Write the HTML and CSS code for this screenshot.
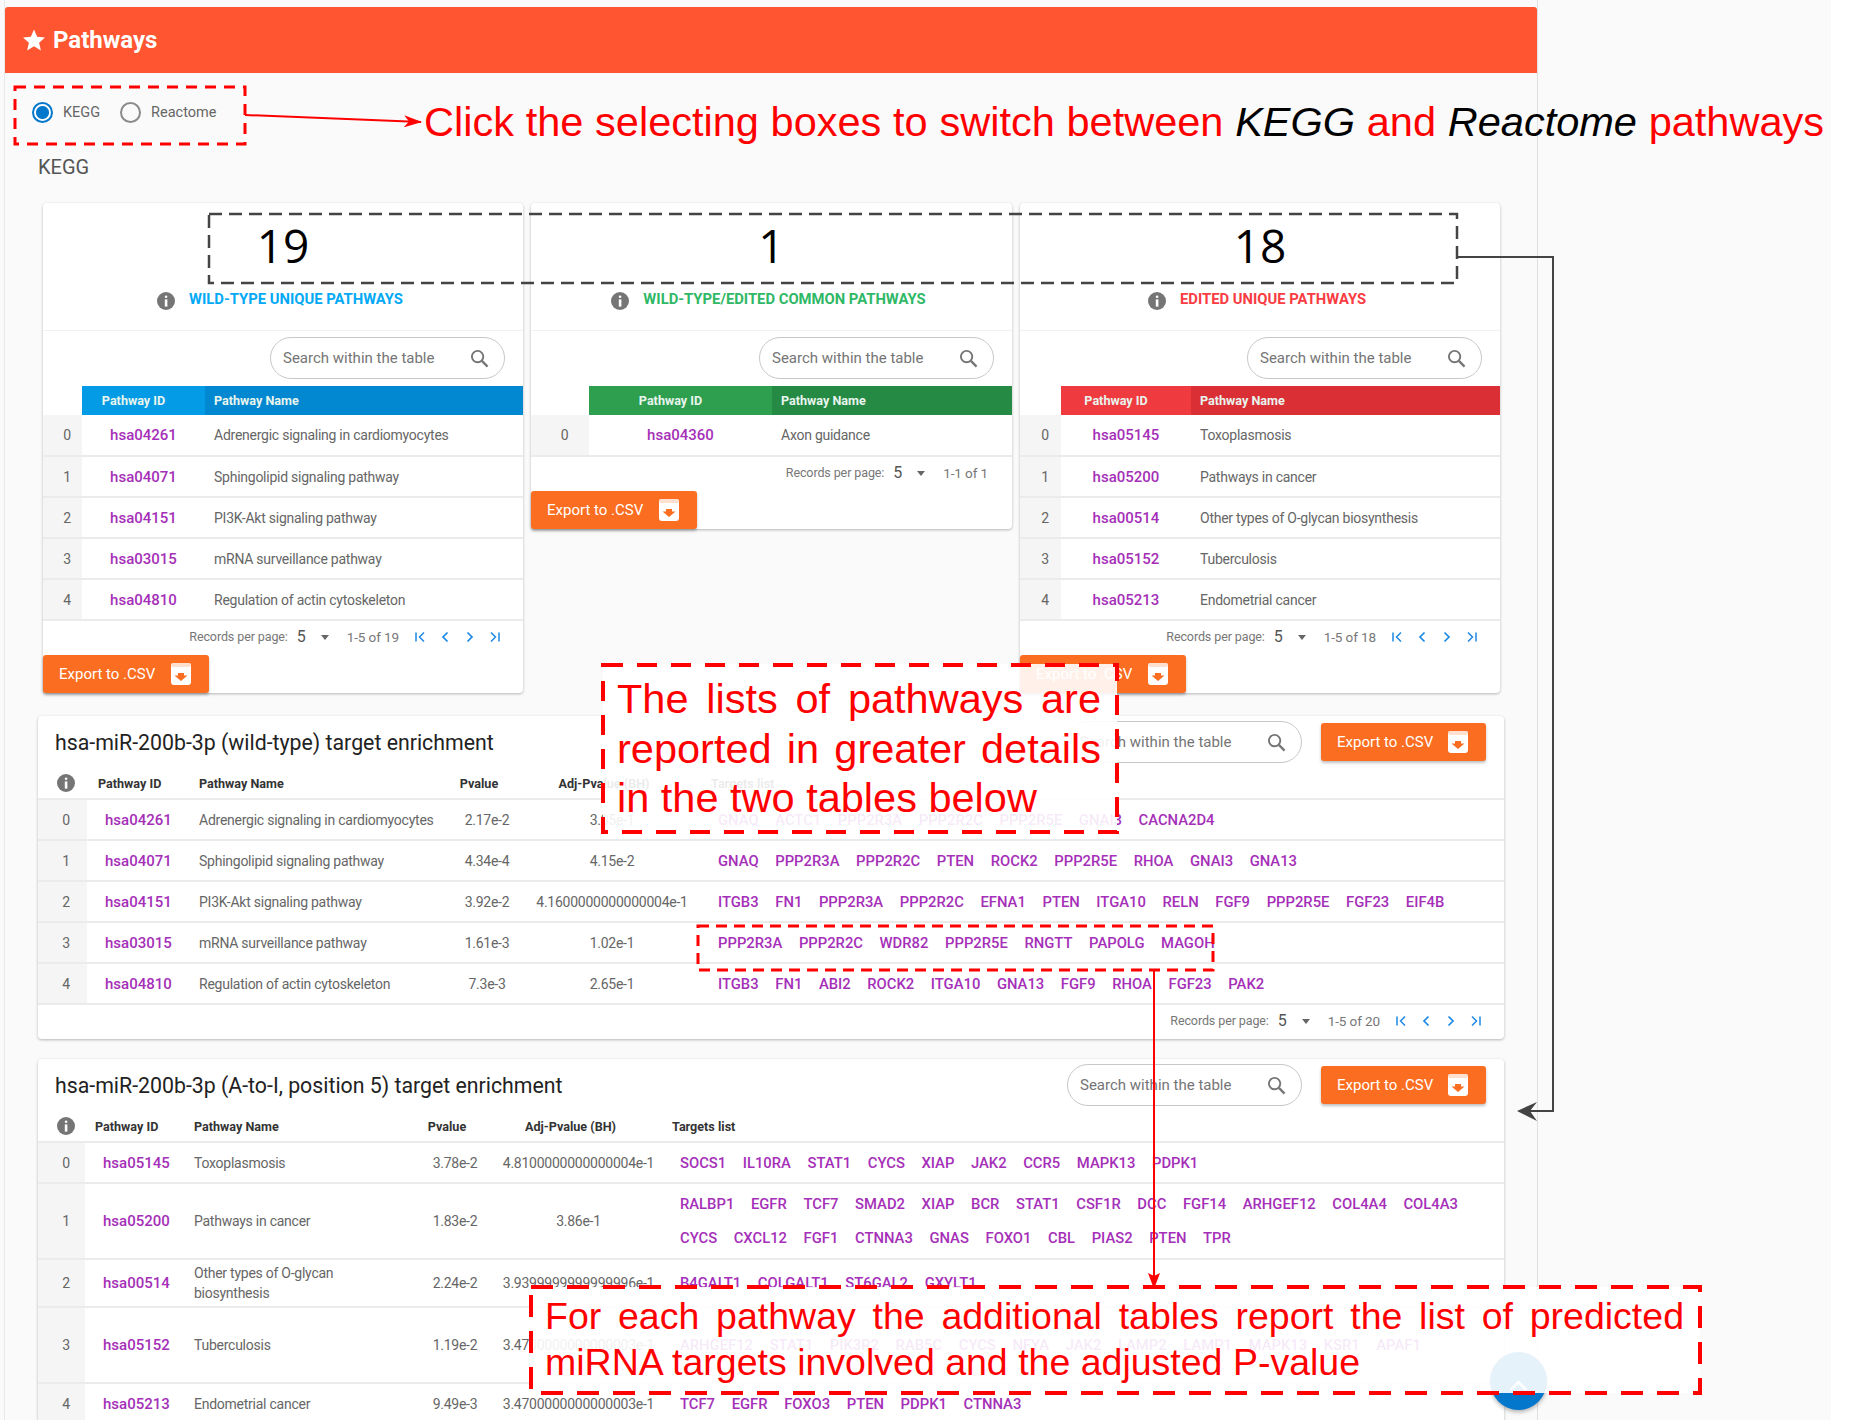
FILE: index.html
```html
<!DOCTYPE html>
<html lang="en">
<head>
    <meta charset="UTF-8">
    <meta name="viewport" content="width=device-width, initial-scale=1.0">
    <title>Pathways</title>
    <link rel="stylesheet" href="styles.css">
</head>
<body>
<svg class="defs" width="0" height="0">
    <symbol id="iconInfo" viewBox="0 0 18 18">
        <circle cx="9" cy="9" r="9" fill="#757575"/>
        <rect x="7.8" y="3.4" width="2.6" height="2.6" rx="1.3" fill="#fff"/>
        <rect x="7.8" y="7.4" width="2.6" height="7.2" fill="#fff"/>
    </symbol>
    <symbol id="iconSearch" viewBox="0 0 20 20">
        <circle cx="8" cy="8" r="6" fill="none" stroke="#757575" stroke-width="2"/>
        <path d="M12.5 12.5L18.5 18.5" stroke="#757575" stroke-width="2.4" fill="none"/>
    </symbol>
    <symbol id="iconExport" viewBox="0 0 20 22">
        <rect x="0" y="0" width="20" height="22" rx="3" fill="#fff"/>
        <rect x="0" y="0" width="20" height="4" rx="2" fill="#fde0cf"/>
        <path d="M7 10h6v2.5h3.5L10 18l-6.5-5.5H7z" fill="#fb6d20"/>
    </symbol>
    <symbol id="iconFirst" viewBox="0 0 12 12">
        <path d="M2 1.5v9M10 1.5L5.5 6l4.500 4.500" fill="none" stroke="#1e88e5" stroke-width="1.5"/>
    </symbol>
    <symbol id="iconPrev" viewBox="0 0 12 12">
        <path d="M8.5 1.5L4 6l4.5 4.5" fill="none" stroke="#1e88e5" stroke-width="1.7"/>
    </symbol>
    <symbol id="iconNext" viewBox="0 0 12 12">
        <path d="M3.5 1.5L8 6l-4.5 4.5" fill="none" stroke="#1e88e5" stroke-width="1.7"/>
    </symbol>
    <symbol id="iconLast" viewBox="0 0 12 12">
        <path d="M10 1.5v9M2 1.5L6.5 6 2 10.5" fill="none" stroke="#1e88e5" stroke-width="1.5"/>
    </symbol>
</svg>

<div class="page">
    <div class="panel">
        <div class="panelHeader">
            <svg class="star" viewBox="0 0 24 24"><path d="M12 1.5l3.2 7.3 7.8.7-5.9 5.2 1.8 7.8L12 18.3l-6.9 4.2 1.8-7.8L1 9.5l7.8-.7z" fill="#fff"/></svg>
            <span>Pathways</span>
        </div>

        <div class="radioRow">
            <span class="radio radioOn"></span><span class="radioLabel">KEGG</span>
            <span class="radio"></span><span class="radioLabel">Reactome</span>
        </div>
        <div class="dbName">KEGG</div>

        <div class="cards">
            <div class="card summary">
                <div class="summaryHead">
                    <div class="count">19</div>
                    <div class="summaryTitle"><svg class="info"><use href="#iconInfo"/></svg><span class="blueText">WILD-TYPE UNIQUE PATHWAYS</span></div>
                </div>
                <div class="searchRow">
                    <div class="search"><span>Search within the table</span><svg><use href="#iconSearch"/></svg></div>
                </div>
                <table class="grid smallGrid">
                    <colgroup><col style="width:39px"><col style="width:123px"><col></colgroup>
                    <thead class="blueHead"><tr><th></th><th class="center">Pathway ID</th><th>Pathway Name</th></tr></thead>
                    <tbody>
                        <tr><td class="idx">0</td><td class="center"><a>hsa04261</a></td><td>Adrenergic signaling in cardiomyocytes</td></tr>
                        <tr><td class="idx">1</td><td class="center"><a>hsa04071</a></td><td>Sphingolipid signaling pathway</td></tr>
                        <tr><td class="idx">2</td><td class="center"><a>hsa04151</a></td><td>PI3K-Akt signaling pathway</td></tr>
                        <tr><td class="idx">3</td><td class="center"><a>hsa03015</a></td><td>mRNA surveillance pathway</td></tr>
                        <tr><td class="idx">4</td><td class="center"><a>hsa04810</a></td><td>Regulation of actin cytoskeleton</td></tr>
                    </tbody>
                </table>
                <div class="pager">
                    <span>Records per page:</span><b>5</b><i class="caret"></i><span class="range">1-5 of 19</span>
                    <svg><use href="#iconFirst"/></svg><svg><use href="#iconPrev"/></svg><svg><use href="#iconNext"/></svg><svg><use href="#iconLast"/></svg>
                </div>
                <div class="exportBtn">Export to .CSV<svg><use href="#iconExport"/></svg></div>
            </div>

            <div class="card summary middle">
                <div class="summaryHead">
                    <div class="count">1</div>
                    <div class="summaryTitle"><svg class="info"><use href="#iconInfo"/></svg><span class="greenText">WILD-TYPE/EDITED COMMON PATHWAYS</span></div>
                </div>
                <div class="searchRow">
                    <div class="search"><span>Search within the table</span><svg><use href="#iconSearch"/></svg></div>
                </div>
                <table class="grid smallGrid">
                    <colgroup><col style="width:58px"><col style="width:183px"><col></colgroup>
                    <thead class="greenHead"><tr><th></th><th class="center">Pathway ID</th><th>Pathway Name</th></tr></thead>
                    <tbody>
                        <tr><td class="idx">0</td><td class="center"><a>hsa04360</a></td><td>Axon guidance</td></tr>
                    </tbody>
                </table>
                <div class="pager">
                    <span>Records per page:</span><b>5</b><i class="caret"></i><span class="range">1-1 of 1</span>
                </div>
                <div class="exportBtn">Export to .CSV<svg><use href="#iconExport"/></svg></div>
            </div>

            <div class="card summary">
                <div class="summaryHead">
                    <div class="count">18</div>
                    <div class="summaryTitle"><svg class="info"><use href="#iconInfo"/></svg><span class="redText">EDITED UNIQUE PATHWAYS</span></div>
                </div>
                <div class="searchRow">
                    <div class="search"><span>Search within the table</span><svg><use href="#iconSearch"/></svg></div>
                </div>
                <table class="grid smallGrid">
                    <colgroup><col style="width:41px"><col style="width:130px"><col></colgroup>
                    <thead class="redHead"><tr><th></th><th class="center">Pathway ID</th><th>Pathway Name</th></tr></thead>
                    <tbody>
                        <tr><td class="idx">0</td><td class="center"><a>hsa05145</a></td><td>Toxoplasmosis</td></tr>
                        <tr><td class="idx">1</td><td class="center"><a>hsa05200</a></td><td>Pathways in cancer</td></tr>
                        <tr><td class="idx">2</td><td class="center"><a>hsa00514</a></td><td>Other types of O-glycan biosynthesis</td></tr>
                        <tr><td class="idx">3</td><td class="center"><a>hsa05152</a></td><td>Tuberculosis</td></tr>
                        <tr><td class="idx">4</td><td class="center"><a>hsa05213</a></td><td>Endometrial cancer</td></tr>
                    </tbody>
                </table>
                <div class="pager">
                    <span>Records per page:</span><b>5</b><i class="caret"></i><span class="range">1-5 of 18</span>
                    <svg><use href="#iconFirst"/></svg><svg><use href="#iconPrev"/></svg><svg><use href="#iconNext"/></svg><svg><use href="#iconLast"/></svg>
                </div>
                <div class="exportBtn">Export to .CSV<svg><use href="#iconExport"/></svg></div>
            </div>
        </div>

        <div class="card wide">
            <div class="wideHead">
                <h2>hsa-miR-200b-3p (wild-type) target enrichment</h2>
                <div class="search"><span>Search within the table</span><svg><use href="#iconSearch"/></svg></div>
                <div class="exportBtn">Export to .CSV<svg><use href="#iconExport"/></svg></div>
            </div>
            <table class="grid bigGrid tableWt">
                <colgroup><col style="width:49px"><col style="width:103px"><col style="width:260px"><col style="width:74px"><col style="width:176px"><col></colgroup>
                <thead><tr><th class="center"><svg class="info"><use href="#iconInfo"/></svg></th><th>Pathway ID</th><th>Pathway Name</th><th class="center pHead">Pvalue</th><th class="center pHead">Adj-Pvalue (BH)</th><th>Targets list</th></tr></thead>
                <tbody>
                    <tr><td class="idx">0</td><td class="idCell"><a>hsa04261</a></td><td>Adrenergic signaling in cardiomyocytes</td><td class="center">2.17e-2</td><td class="center">3.05e-1</td><td class="targets"><a>GNAQ</a><a>ACTC1</a><a>PPP2R3A</a><a>PPP2R2C</a><a>PPP2R5E</a><a>GNAI3</a><a>CACNA2D4</a></td></tr>
                    <tr><td class="idx">1</td><td class="idCell"><a>hsa04071</a></td><td>Sphingolipid signaling pathway</td><td class="center">4.34e-4</td><td class="center">4.15e-2</td><td class="targets"><a>GNAQ</a><a>PPP2R3A</a><a>PPP2R2C</a><a>PTEN</a><a>ROCK2</a><a>PPP2R5E</a><a>RHOA</a><a>GNAI3</a><a>GNA13</a></td></tr>
                    <tr><td class="idx">2</td><td class="idCell"><a>hsa04151</a></td><td>PI3K-Akt signaling pathway</td><td class="center">3.92e-2</td><td class="center">4.1600000000000004e-1</td><td class="targets"><a>ITGB3</a><a>FN1</a><a>PPP2R3A</a><a>PPP2R2C</a><a>EFNA1</a><a>PTEN</a><a>ITGA10</a><a>RELN</a><a>FGF9</a><a>PPP2R5E</a><a>FGF23</a><a>EIF4B</a></td></tr>
                    <tr><td class="idx">3</td><td class="idCell"><a>hsa03015</a></td><td>mRNA surveillance pathway</td><td class="center">1.61e-3</td><td class="center">1.02e-1</td><td class="targets"><a>PPP2R3A</a><a>PPP2R2C</a><a>WDR82</a><a>PPP2R5E</a><a>RNGTT</a><a>PAPOLG</a><a>MAGOH</a></td></tr>
                    <tr><td class="idx">4</td><td class="idCell"><a>hsa04810</a></td><td>Regulation of actin cytoskeleton</td><td class="center">7.3e-3</td><td class="center">2.65e-1</td><td class="targets"><a>ITGB3</a><a>FN1</a><a>ABI2</a><a>ROCK2</a><a>ITGA10</a><a>GNA13</a><a>FGF9</a><a>RHOA</a><a>FGF23</a><a>PAK2</a></td></tr>
                </tbody>
            </table>
            <div class="pager">
                <span>Records per page:</span><b>5</b><i class="caret"></i><span class="range">1-5 of 20</span>
                <svg><use href="#iconFirst"/></svg><svg><use href="#iconPrev"/></svg><svg><use href="#iconNext"/></svg><svg><use href="#iconLast"/></svg>
            </div>
        </div>

        <div class="card wide">
            <div class="wideHead">
                <h2>hsa-miR-200b-3p (A-to-I, position 5) target enrichment</h2>
                <div class="search"><span>Search within the table</span><svg><use href="#iconSearch"/></svg></div>
                <div class="exportBtn">Export to .CSV<svg><use href="#iconExport"/></svg></div>
            </div>
            <table class="grid bigGrid tableEdited">
                <colgroup><col style="width:47px"><col style="width:100px"><col style="width:240px"><col style="width:60px"><col style="width:180px"><col></colgroup>
                <thead><tr><th class="center"><svg class="info"><use href="#iconInfo"/></svg></th><th>Pathway ID</th><th>Pathway Name</th><th class="center pHead">Pvalue</th><th class="center pHead">Adj-Pvalue (BH)</th><th>Targets list</th></tr></thead>
                <tbody>
                    <tr><td class="idx">0</td><td class="idCell"><a>hsa05145</a></td><td>Toxoplasmosis</td><td class="center">3.78e-2</td><td class="center">4.8100000000000004e-1</td><td class="targets"><a>SOCS1</a><a>IL10RA</a><a>STAT1</a><a>CYCS</a><a>XIAP</a><a>JAK2</a><a>CCR5</a><a>MAPK13</a><a>PDPK1</a></td></tr>
                    <tr class="tallRow"><td class="idx">1</td><td class="idCell"><a>hsa05200</a></td><td>Pathways in cancer</td><td class="center">1.83e-2</td><td class="center">3.86e-1</td><td class="targets"><a>RALBP1</a><a>EGFR</a><a>TCF7</a><a>SMAD2</a><a>XIAP</a><a>BCR</a><a>STAT1</a><a>CSF1R</a><a>DCC</a><a>FGF14</a><a>ARHGEF12</a><a>COL4A4</a><a>COL4A3</a><a>CYCS</a><a>CXCL12</a><a>FGF1</a><a>CTNNA3</a><a>GNAS</a><a>FOXO1</a><a>CBL</a><a>PIAS2</a><a>PTEN</a><a>TPR</a></td></tr>
                    <tr class="midRow"><td class="idx">2</td><td class="idCell"><a>hsa00514</a></td><td class="wrapName">Other types of O-glycan biosynthesis</td><td class="center">2.24e-2</td><td class="center">3.9399999999999996e-1</td><td class="targets"><a>B4GALT1</a><a>COLGALT1</a><a>ST6GAL2</a><a>GXYLT1</a></td></tr>
                    <tr class="tallRow"><td class="idx">3</td><td class="idCell"><a>hsa05152</a></td><td>Tuberculosis</td><td class="center">1.19e-2</td><td class="center">3.4700000000000003e-1</td><td class="targets"><a>ARHGEF12</a><a>STAT1</a><a>PIK3R2</a><a>RAB5C</a><a>CYCS</a><a>NFYA</a><a>JAK2</a><a>LAMP2</a><a>LAMP1</a><a>MAPK13</a><a>KSR1</a><a>APAF1</a></td></tr>
                    <tr><td class="idx">4</td><td class="idCell"><a>hsa05213</a></td><td>Endometrial cancer</td><td class="center">9.49e-3</td><td class="center">3.4700000000000003e-1</td><td class="targets"><a>TCF7</a><a>EGFR</a><a>FOXO3</a><a>PTEN</a><a>PDPK1</a><a>CTNNA3</a></td></tr>
                </tbody>
            </table>
        </div>
    </div>

    <!-- scroll to top, sits under the note box -->
    <div class="scrollTop"><svg viewBox="0 0 16 16"><path d="M3.5 10L8 5.5l4.5 4.5" fill="none" stroke="#fff" stroke-width="1.6"/></svg></div>

    <!-- annotations drawn on top of the screenshot -->
    <div class="topNote">Click the selecting boxes to switch between <em>KEGG</em> and <em>Reactome</em> pathways</div>
    <div class="note noteLists">
        <div class="fill">The lists of pathways are</div>
        <div class="fill">reported in greater details</div>
        <div>in the two tables below</div>
    </div>
    <div class="note noteTargets">
        <div class="fill">For each pathway the additional tables report the list of predicted</div>
        <div>miRNA targets involved and the adjusted P-value</div>
    </div>
    <svg class="marks" viewBox="0 0 1854 1425">
        <defs>
            <marker id="redHead" markerWidth="18" markerHeight="12" refX="17" refY="6" orient="auto" markerUnits="userSpaceOnUse"><path d="M0 0L18 6L0 12L5 6z" fill="#f00"/></marker>
            <marker id="redDown" markerWidth="12" markerHeight="16" refX="6" refY="15" orient="0" markerUnits="userSpaceOnUse"><path d="M0 0L6 3L12 0L6 16z" fill="#f00"/></marker>
        </defs>
        <rect x="15" y="87" width="230" height="57" fill="none" stroke="#f00" stroke-width="3" stroke-dasharray="11 8"/>
        <path d="M245 115L421 122" stroke="#f00" stroke-width="2" fill="none" marker-end="url(#redHead)"/>
        <rect x="209" y="214" width="1248" height="69" fill="none" stroke="#444" stroke-width="2.5" stroke-dasharray="13 7"/>
        <path d="M1457 257H1553V1111H1520" stroke="#444" stroke-width="2" fill="none"/>
        <path d="M1517 1111L1537 1102L1530 1111L1537 1121z" fill="#444"/>
        <rect x="603" y="665" width="514" height="167" fill="none" stroke="#f00" stroke-width="4" stroke-dasharray="20 14"/>
        <rect x="698" y="926" width="515" height="44" fill="none" stroke="#f00" stroke-width="3" stroke-dasharray="11 7"/>
        <path d="M1154 970V1288" stroke="#f00" stroke-width="2" fill="none" marker-end="url(#redDown)"/>
        <rect x="531" y="1287" width="1169" height="106" fill="none" stroke="#f00" stroke-width="4" stroke-dasharray="22 14"/>
    </svg>
</div>
</body>
</html>
```

FILE: styles.css
```css
* {
    box-sizing: border-box;
}
body {
    margin: 0;
    padding: 0;
    background-color: #fff;
    font-family: Roboto, "Liberation Sans", sans-serif;
    color: #666;
}
.defs {
    position: absolute;
}
.page {
    position: relative;
    width: 1831px;
    height: 1420px;
    background-color: #fafafa;
    overflow: hidden;
}
.panel {
    width: 1534px;
    height: 1420px;
    margin-left: 4px;
    padding-top: 7px;
    border-left: 1px solid #e8e8e8;
    border-right: 1px solid #e0e0e0;
    overflow: hidden;
}
.panelHeader {
    display: flex;
    align-items: center;
    gap: 7px;
    height: 66px;
    padding-left: 17px;
    background-color: #ff5530;
    border-radius: 3px 3px 0 0;
    color: #fff;
    font-size: 24px;
    font-weight: 700;
}
.star {
    width: 24px;
    height: 24px;
}

/* radio boxes */
.radioRow {
    display: flex;
    align-items: center;
    height: 40px;
    margin-top: 19px;
    padding-left: 27px;
    font-size: 14.5px;
}
.radio {
    width: 21px;
    height: 21px;
    border: 2px solid #8a8a8a;
    border-radius: 50%;
}
.radioOn {
    border-color: #0277cc;
    background: radial-gradient(circle, #0277cc 0 6px, #fff 7px);
}
.radioLabel {
    margin: 0 20px 0 10px;
    color: #666;
}
.dbName {
    margin: 20px 0 0 33px;
    height: 51px;
    line-height: 30px;
    font-size: 20px;
    color: #555;
}

/* cards */
.cards {
    display: flex;
    align-items: flex-start;
    gap: 8px;
    margin-left: 38px;
    height: 490px;
}
.card {
    background-color: #fff;
    border-radius: 4px;
    box-shadow: 0 1px 3px rgba(0, 0, 0, 0.28);
}
.summary {
    width: 480px;
}
.middle {
    width: 481px;
}
.summaryHead {
    height: 128px;
    padding-top: 8px;
    border-bottom: 1px solid #f2f2f2;
}
.count {
    height: 68px;
    line-height: 68px;
    text-align: center;
    font-family: "Open Sans", sans-serif;
    font-size: 46px;
    color: #000;
}
.summaryTitle {
    display: flex;
    justify-content: center;
    align-items: center;
    gap: 14px;
    margin-top: 13px;
    padding-right: 6px;
    font-size: 14.8px;
    font-weight: 700;
}
.summaryTitle span {
    position: relative;
    top: -2px;
}
.info {
    width: 18px;
    height: 18px;
}
.blueText {
    color: #03a9f4;
}
.greenText {
    color: #2fb866;
}
.redText {
    color: #f93b42;
}
.searchRow {
    display: flex;
    justify-content: flex-end;
    height: 55px;
    padding: 6px 18px 0 0;
}
.search {
    display: flex;
    align-items: center;
    justify-content: space-between;
    width: 235px;
    height: 42px;
    padding: 0 15px 0 12px;
    border: 1px solid #c8c8c8;
    border-radius: 21px;
    background-color: #fff;
    font-size: 15px;
    color: #757575;
}
.search svg {
    width: 19px;
    height: 19px;
}

/* tables */
.grid {
    width: 100%;
    border-collapse: collapse;
    table-layout: fixed;
    font-size: 14px;
}
.grid th {
    padding: 0 0 0 9px;
    text-align: left;
    font-size: 12.6px;
    font-weight: 700;
}
.grid td {
    padding: 0 0 0 9px;
    height: 41px;
    border-bottom: 2px solid #ebebeb;
    letter-spacing: -0.25px;
    color: #666;
}
.grid .center {
    padding: 0;
    text-align: center;
}
.grid a {
    color: #a52fb8;
    font-size: 15px;
    font-weight: 500;
    letter-spacing: 0;
}
.grid td.idx {
    padding: 0 0 0 9px;
    text-align: center;
    background-color: #f5f5f5;
    color: #666;
}
.smallGrid thead tr {
    height: 29px;
    color: #e8f5ee;
}
.smallGrid th.center {
    padding-right: 20px;
}
.blueHead th:nth-child(2) { background-color: #039be5; }
.blueHead th:nth-child(3) { background-color: #0288d1; }
.greenHead th:nth-child(2) { background-color: #2e9e4f; }
.greenHead th:nth-child(3) { background-color: #258a43; }
.redHead th:nth-child(2) { background-color: #ef3a3f; }
.redHead th:nth-child(3) { background-color: #db2f36; }

.pager {
    display: flex;
    justify-content: flex-end;
    align-items: center;
    height: 34px;
    padding: 0 22px 3px 0;
    font-size: 12.5px;
    letter-spacing: -0.1px;
    color: #777;
}
.pager b {
    margin-left: 9px;
    font-size: 16px;
    font-weight: 400;
    color: #555;
}
.pager svg {
    width: 12px;
    height: 12px;
    margin-left: 13px;
}
.caret {
    width: 0;
    height: 0;
    margin: 2px 0 0 15px;
    border: 4.5px solid transparent;
    border-top: 5px solid #666;
    border-bottom: 0;
}
.range {
    margin: 0 2px 0 18px;
    font-size: 13.5px;
}
.exportBtn {
    display: flex;
    align-items: center;
    justify-content: space-between;
    width: 166px;
    height: 38px;
    padding: 0 18px 0 16px;
    background-color: #fb6d20;
    border-radius: 3px;
    box-shadow: 0 2px 3px rgba(0, 0, 0, 0.25);
    color: #fff;
    font-size: 15px;
}
.exportBtn svg {
    width: 20px;
    height: 22px;
}

/* the two wide tables */
.wide {
    width: 1466px;
    margin: 23px 0 20px 33px;
}
.wide + .wide {
    margin-top: 20px;
}
.wideHead {
    display: flex;
    align-items: center;
    height: 52px;
    padding: 0 18px 0 17px;
}
.wideHead h2 {
    flex: 1;
    margin: 0;
    font-size: 21.3px;
    font-weight: 400;
    color: #222;
}
.wideHead .exportBtn {
    width: 165px;
    margin-left: 19px;
}
.bigGrid thead tr {
    height: 31px;
    color: #333;
}
.bigGrid thead {
    border-bottom: 2px solid #ebebeb;
}
.bigGrid .info {
    vertical-align: middle;
}
.grid .pHead {
    padding-right: 16px;
}
.grid .idCell {
    padding-left: 18px;
}
.tableWt th:nth-child(1) {
    padding-left: 6px;
}
.tableWt th:nth-child(2) {
    padding-left: 11px;
}
.tableWt th:nth-child(6) {
    padding-left: 11px;
}
.tableWt td.idx {
    padding-left: 7px;
}
.tableEdited th:nth-child(1) {
    padding-left: 9px;
}
.tableEdited th:nth-child(2) {
    padding-left: 10px;
}
.tableEdited th:nth-child(5),
.tableEdited td:nth-child(5) {
    padding-left: 7px;
}
.tableEdited th:nth-child(6) {
    padding-left: 7px;
}
.grid .targets {
    padding: 2px 0 2px 18px;
    line-height: 34px;
}
.tableEdited .targets {
    padding-left: 15px;
}
.grid .targets a {
    display: inline-block;
    margin-right: 16.6px;
    font-size: 14.8px;
}
.grid .tallRow td {
    height: 76px;
}
.grid .midRow td {
    height: 48px;
}
.grid .wrapName {
    padding-right: 60px;
    line-height: 20px;
}

/* overlays */
.scrollTop {
    position: absolute;
    left: 1490px;
    top: 1352px;
    width: 57px;
    height: 58px;
    padding: 21px 15px;
    background-color: #0277cc;
    border-radius: 50%;
    box-shadow: 0 2px 4px rgba(0, 0, 0, 0.3);
}
.topNote {
    position: absolute;
    left: 424px;
    top: 96px;
    width: 1400px;
    font-family: "Liberation Sans", sans-serif;
    font-size: 41.5px;
    line-height: 52px;
    color: #f00;
    text-align-last: justify;
}
.topNote em {
    color: #000;
}
.note {
    position: absolute;
    background-color: rgba(255, 255, 255, 0.9);
    font-family: "Liberation Sans", sans-serif;
    color: #f00;
}
.fill {
    text-align-last: justify;
}
.noteLists {
    left: 603px;
    top: 664px;
    width: 514px;
    height: 168px;
    padding: 10px 16px 0 14px;
    font-size: 41.5px;
    line-height: 49.5px;
}
.noteTargets {
    left: 531px;
    top: 1287px;
    width: 1169px;
    height: 106px;
    padding: 6px 16px 0 14px;
    font-size: 37.5px;
    line-height: 46px;
}
.marks {
    position: absolute;
    left: 0;
    top: 0;
    width: 1854px;
    height: 1425px;
    pointer-events: none;
}
```
